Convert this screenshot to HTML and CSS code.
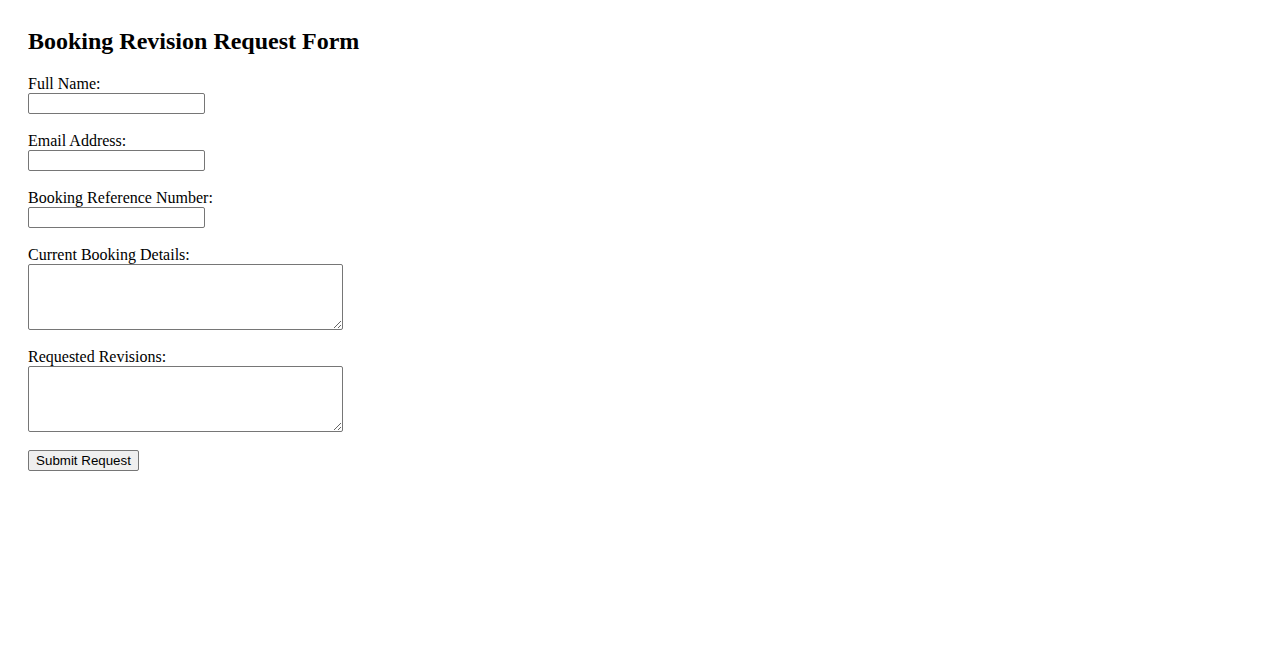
FILE: index.html
```html
<!DOCTYPE html>
<html lang="en">
<head>
  <meta charset="UTF-8" />
  <meta name="viewport" content="width=device-width, initial-scale=1.0" />
  <title>Booking Revision Request Form</title>
  <link rel="stylesheet" href="styles.css">
</head>
<body>
  <h2>Booking Revision Request Form</h2>
  <form class="revision-form" onsubmit="return false;">
    <div class="field">
      <label for="fullName">Full Name:</label>
      <input type="text" id="fullName" name="fullName" />
    </div>
    <div class="field">
      <label for="email">Email Address:</label>
      <input type="email" id="email" name="email" />
    </div>
    <div class="field">
      <label for="bookingRef">Booking Reference Number:</label>
      <input type="text" id="bookingRef" name="bookingRef" />
    </div>
    <div class="field">
      <label for="currentDetails">Current Booking Details:</label>
      <textarea id="currentDetails" name="currentDetails"></textarea>
    </div>
    <div class="field">
      <label for="revisions">Requested Revisions:</label>
      <textarea id="revisions" name="revisions"></textarea>
    </div>
    <button type="submit">Submit Request</button>
  </form>
</body>
</html>
```

FILE: styles.css
```css
body {
  margin: 8px;
  padding: 19px 20px 20px;
  font-family: "Liberation Serif", "Times New Roman", serif;
  font-size: 16px;
  color: #000;
  background: #fff;
}
h2 {
  margin: 0 0 20px;
  font-size: 24px;
  line-height: 28px;
}
.field {
  margin-bottom: 18px;
}
label {
  display: block;
  line-height: 18px;
}
input,
textarea {
  display: block;
  box-sizing: border-box;
  margin: 0;
  border: 1px solid #767676;
  border-radius: 2px;
  padding: 1px 2px;
  font-family: "Liberation Mono", monospace;
  font-size: 13.33px;
}
input {
  width: 177px;
  height: 21px;
  font-family: "Liberation Sans", Arial, sans-serif;
}
textarea {
  width: 315px;
  height: 66px;
}
button {
  box-sizing: border-box;
  height: 21px;
  width: 111px;
  margin: 0;
  padding: 1px 6px;
  font-family: "Liberation Sans", Arial, sans-serif;
  font-size: 13.33px;
  color: #000;
  background: #efefef;
  border: 1px solid #767676;
  border-radius: 2px;
}
```
